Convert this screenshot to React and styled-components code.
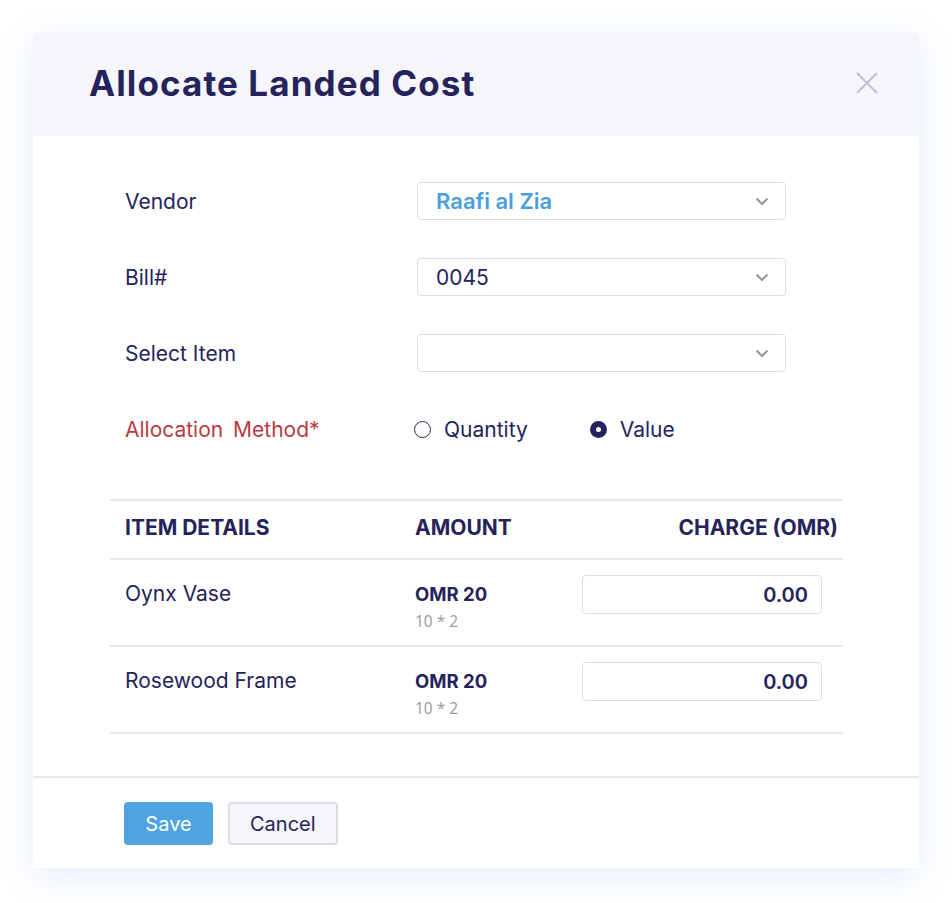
import React from 'react'
import styled, { createGlobalStyle } from 'styled-components'

const GlobalStyle = createGlobalStyle`
  body {
    margin: 0;
    background: #ffffff;
    font-family: Inter, "Open Sans", sans-serif;
    color: #25235b;
  }
`

const Page = styled.div`
  padding: 33px 0 0 33px;
  width: 952px;
  height: 903px;
  box-sizing: border-box;
`

const Dialog = styled.div`
  width: 886px;
  background: #fff;
  box-shadow: 0 8px 34px rgba(90, 150, 240, 0.16);
`

const Header = styled.div`
  height: 103px;
  background: #f6f6fa;
  display: flex;
  align-items: center;
  justify-content: space-between;
  padding: 0 40px 4px 56px;
  box-sizing: border-box;
`

const Title = styled.h1`
  margin: 0;
  font-size: 35px;
  font-weight: 700;
  color: #25235b;
  letter-spacing: 1.1px;
`

const Close = styled.button`
  border: 0;
  background: none;
  padding: 0;
  width: 24px;
  height: 24px;
  display: flex;
  align-items: center;
  justify-content: center;
  cursor: pointer;
`

const Body = styled.div`
  padding: 46px 76px 42px 77px;
`

const Form = styled.div`
  display: flex;
  flex-direction: column;
  gap: 38px;
  padding-left: 15px;
`

const Row = styled.div`
  display: grid;
  grid-template-columns: 292px 369px;
  align-items: center;
  height: 38px;
`

const Label = styled.label`
  font-size: 21px;
  color: ${p => (p.required ? '#b83c3f' : '#25235b')};
  word-spacing: ${p => (p.required ? '4px' : '0')};
`

const Select = styled.div`
  height: 38px;
  border: 1px solid #dcdce4;
  border-radius: 4px;
  box-sizing: border-box;
  display: flex;
  align-items: center;
  justify-content: space-between;
  padding: 0 16px 0 18px;
  font-size: ${p => (p.accent ? '22px' : '21px')};
  font-weight: ${p => (p.accent ? 600 : 400)};
  color: ${p => (p.accent ? '#4a9fdd' : '#25235b')};
`

const Radios = styled.div`
  display: flex;
  align-items: center;
  gap: 62px;
  margin-left: -3px;
`

const Radio = styled.span`
  display: flex;
  align-items: center;
  gap: 13px;
  font-size: 21px;
  color: #25235b;
`

const Dot = styled.span`
  width: 17px;
  height: 17px;
  border-radius: 50%;
  box-sizing: border-box;
  border: ${p => (p.checked ? '6px solid #25235b' : '1.5px solid #25235b')};
  background: #fff;
`

const Table = styled.div`
  margin-top: 51px;
  border-top: 2px solid #e6e6ee;
`

const TableRow = styled.div`
  display: grid;
  grid-template-columns: 290px 167px 1fr;
  padding: ${p => (p.head ? '0 0 4px 15px' : '15px 0 0 15px')};
  height: ${p => (p.head ? '59px' : '87px')};
  box-sizing: border-box;
  align-items: ${p => (p.head ? 'center' : 'start')};
  border-bottom: 2px solid #e6e6ee;
`

const HeadCell = styled.div`
  font-size: 21px;
  font-weight: 700;
  color: #25235b;
  text-align: ${p => (p.right ? 'right' : 'left')};
  padding-right: ${p => (p.right ? '5px' : '0')};
`

const ItemName = styled.div`
  font-size: 21px;
  color: #25235b;
  margin-top: 6px;
`

const Amount = styled.div`
  margin-top: 8px;
`

const AmountValue = styled.div`
  font-size: 18.5px;
  font-weight: 700;
  color: #25235b;
  line-height: 22px;
`

const AmountSub = styled.div`
  font-family: "Open Sans", sans-serif;
  font-size: 15.5px;
  color: #9a9a9a;
  line-height: 20px;
  margin-top: 6px;
`

const ChargeCell = styled.div`
  display: flex;
  justify-content: flex-end;
  padding-right: 21px;
`

const ChargeInput = styled.div`
  width: 240px;
  height: 39px;
  border: 1px solid #dcdce4;
  border-radius: 4px;
  box-sizing: border-box;
  display: flex;
  align-items: center;
  justify-content: flex-end;
  padding-right: 13px;
  font-size: 20px;
  font-weight: 600;
  color: #25235b;
`

const Footer = styled.div`
  border-top: 2px solid #e6e6ee;
  padding: 24px 0 23px 91px;
  display: flex;
  gap: 15px;
`

const Button = styled.button`
  height: 43px;
  padding: 0 20px;
  border-radius: 4px;
  font-family: Inter, sans-serif;
  font-size: 20px;
  cursor: pointer;
  background: ${p => (p.primary ? '#4ea3e0' : '#f6f6fa')};
  color: ${p => (p.primary ? '#ffffff' : '#25235b')};
  border: ${p => (p.primary ? '0' : '2px solid #dcdce4')};
  min-width: ${p => (p.primary ? '89px' : '109px')};
`

const Chevron = () => (
  <svg width="14" height="9" viewBox="0 0 14 9" fill="none">
    <path d="M1.5 1.5 L7 7 L12.5 1.5" stroke="#9a9a9a" strokeWidth="2.2" />
  </svg>
)

const items = [
  { name: 'Oynx Vase', amount: 'OMR 20', calc: '10 * 2', charge: '0.00' },
  { name: 'Rosewood Frame', amount: 'OMR 20', calc: '10 * 2', charge: '0.00' },
]

export default function App() {
  return (
    <Page>
      <GlobalStyle />
      <Dialog>
        <Header>
          <Title>Allocate Landed Cost</Title>
          <Close aria-label="Close">
            <svg width="22" height="22" viewBox="0 0 22 22">
              <path d="M1 1 L21 21 M21 1 L1 21" stroke="#c2bfd6" strokeWidth="2.2" />
            </svg>
          </Close>
        </Header>
        <Body>
          <Form>
            <Row>
              <Label>Vendor</Label>
              <Select accent>Raafi al Zia<Chevron /></Select>
            </Row>
            <Row>
              <Label>Bill#</Label>
              <Select>0045<Chevron /></Select>
            </Row>
            <Row>
              <Label>Select Item</Label>
              <Select><span /><Chevron /></Select>
            </Row>
            <Row>
              <Label required>Allocation Method*</Label>
              <Radios>
                <Radio><Dot />Quantity</Radio>
                <Radio><Dot checked />Value</Radio>
              </Radios>
            </Row>
          </Form>
          <Table>
            <TableRow head>
              <HeadCell>ITEM DETAILS</HeadCell>
              <HeadCell>AMOUNT</HeadCell>
              <HeadCell right>CHARGE (OMR)</HeadCell>
            </TableRow>
            {items.map(it => (
              <TableRow key={it.name}>
                <ItemName>{it.name}</ItemName>
                <Amount>
                  <AmountValue>{it.amount}</AmountValue>
                  <AmountSub>{it.calc}</AmountSub>
                </Amount>
                <ChargeCell>
                  <ChargeInput>{it.charge}</ChargeInput>
                </ChargeCell>
              </TableRow>
            ))}
          </Table>
        </Body>
        <Footer>
          <Button primary>Save</Button>
          <Button>Cancel</Button>
        </Footer>
      </Dialog>
    </Page>
  )
}
